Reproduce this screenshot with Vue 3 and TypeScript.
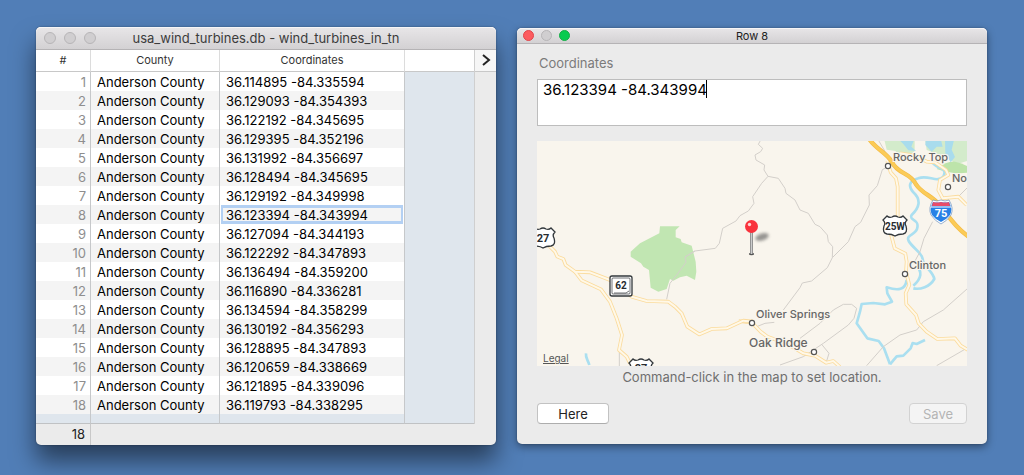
<script setup lang="ts">
import { ref } from 'vue'

interface Turbine {
  county: string
  coordinates: string
}

interface Town {
  name: string
  x: number
  y: number
  labelX: number
  labelY: number
  major?: boolean
}

const turbines: Turbine[] = [
  '36.114895 -84.335594',
  '36.129093 -84.354393',
  '36.122192 -84.345695',
  '36.129395 -84.352196',
  '36.131992 -84.356697',
  '36.128494 -84.345695',
  '36.129192 -84.349998',
  '36.123394 -84.343994',
  '36.127094 -84.344193',
  '36.122292 -84.347893',
  '36.136494 -84.359200',
  '36.116890 -84.336281',
  '36.134594 -84.358299',
  '36.130192 -84.356293',
  '36.128895 -84.347893',
  '36.120659 -84.338669',
  '36.121895 -84.339096',
  '36.119793 -84.338295',
].map((coordinates) => ({ county: 'Anderson County', coordinates }))

const selected = ref(7)
const value = ref(turbines[7].coordinates)

const towns: Town[] = [
  { name: 'Rocky Top', x: 351, y: 25, labelX: 356, labelY: 20 },
  { name: 'No', x: 411, y: 46, labelX: 415, labelY: 41 },
  { name: 'Clinton', x: 368, y: 133, labelX: 372, labelY: 128 },
  { name: 'Oliver Springs', x: 215, y: 182, labelX: 219, labelY: 177 },
  { name: 'Oak Ridge', x: 277, y: 211, labelX: 212, labelY: 206, major: true },
]

const eastRoads = [
  'M442 78 L452 112 L468 130 L473 155 L473 250 L452 295 L464 340 L496 356 L500 380 L498 410 L508 450 L497 475 L499 508 L528 540 L536 565 L560 590 L592 612 L645 610 L662 632 L690 648',
  'M480 55 L525 62 L560 80 L585 82 L618 105 L625 120 L600 135 L595 165 L608 190 L655 185 L680 210',
  'M-4 558 L36 563 L62 590 L82 605 L125 620 L165 640 L190 655 L225 662 L258 683 L280 678 L300 696',
]
const westRoads = [
  'M55 -30 L75 -10 L82 5 L100 12 L107 30 L135 50 L180 52 L240 75 L305 125 L350 138 L415 140 L435 155 L455 175 L472 215 L508 238 L545 222 L590 220 L640 197 L670 200',
  'M135 50 L155 76 L213 103 L240 140 L260 190 L276 240 L267 285 L290 305 L300 325',
]
const eastTracks = [
  'M62 15 L55 28 L68 40 L62 50 L45 60 L48 75 L74 90 L72 105 L84 124 L65 145 L38 185 L42 205 L25 228 L0 242 L-12 258 L-52 280 L-62 325 L-74 340 L-135 348 L-165 366',
  'M84 124 L115 130 L135 160 L138 175 L165 195 L180 225 L205 235 L225 268 L240 275 L262 300 L265 320 L278 335 L277 368 L262 398 L215 438 L187 444 L180 458 L130 525',
  'M435 100 L427 104 L412 152 L387 180 L388 210 L362 262 L345 275 L325 320 L277 368',
  'M415 15 L450 75',
  'M578 260 L552 310 L540 350 L525 378',
  'M690 150 L655 185',
  'M50 575 L75 565 L103 562',
  'M180 610 L240 565 L280 525 L310 508 L335 508 L350 520 L342 550 L325 570 L250 625 L190 665 L120 690',
  'M245 628 L267 655 L260 678',
  'M380 692 L430 635 L480 600 L530 585 L550 560 L610 525 L690 454',
  'M590 692 L690 634',
]
</script>

<template>
  <main class="desktop">
    <section class="window table-window" aria-label="usa_wind_turbines.db">
      <header class="titlebar">
        <div class="lights"><i></i><i></i><i></i></div>
        <h1>usa_wind_turbines.db - wind_turbines_in_tn</h1>
      </header>
      <div class="sheet">
        <table>
          <colgroup>
            <col class="c-num" /><col class="c-county" /><col class="c-coord" /><col />
          </colgroup>
          <thead>
            <tr><th scope="col">#</th><th scope="col">County</th><th scope="col">Coordinates</th><td></td></tr>
          </thead>
          <tbody>
            <tr v-for="(t, i) in turbines" :key="i">
              <td class="num">{{ i + 1 }}</td>
              <td>{{ t.county }}</td>
              <td :class="{ selected: i === selected }">{{ t.coordinates }}</td>
              <td class="empty"></td>
            </tr>
            <tr class="rest"><td></td><td></td><td></td><td></td></tr>
          </tbody>
        </table>
        <div class="side">
          <button type="button" class="expand" aria-label="Show details">
            <svg width="10" height="14" viewBox="0 0 10 14"><path d="M2 1 L8 6 L2 11" /></svg>
          </button>
        </div>
      </div>
      <footer class="status"><span>18</span></footer>
    </section>

    <section class="window detail-window" aria-label="Row 8">
      <header class="titlebar small">
        <div class="lights"><i class="red"></i><i></i><i class="green"></i></div>
        <h2>Row 8</h2>
      </header>
      <form class="detail" @submit.prevent>
        <label for="coordinates">Coordinates</label>
        <div class="field">
          <textarea id="coordinates" v-model="value" spellcheck="false"></textarea>
          <span class="caret"></span>
        </div>
        <div class="map">
          <svg viewBox="0 0 430 225" role="img" aria-label="Map">
            <defs>
              <linearGradient id="needle" x1="0" x2="1" y1="0" y2="0">
                <stop offset="0" stop-color="#777" /><stop offset=".5" stop-color="#ccc" /><stop offset="1" stop-color="#777" />
              </linearGradient>
              <filter id="soft" x="-50%" y="-50%" width="200%" height="200%"><feGaussianBlur stdDeviation="1.6" /></filter>
              <path id="us-shield" d="M-8 -10 Q-6 -8 -3 -9 Q0 -11 3 -9 Q6 -8 8 -10 L12 -6 Q9 -3 11 0 Q13 7 8 8 Q3 8 0 10 Q-3 8 -8 8 Q-13 7 -11 0 Q-9 -3 -12 -6Z" />
            </defs>
            <rect width="430" height="225" fill="#f9f5ed" />
            <g transform="scale(.33333)" fill="none" stroke-linejoin="round">
              <g transform="translate(-21 -18)">
                <path fill="#c1e6b2" d="M390 274 H449 L437 285 V307 L452 312 L455 322 L485 332 L497 380 L499 410 L495 435 L470 422 L450 427 L430 437 L420 432 L410 462 L385 470 L362 458 L357 405 L340 395 L333 385 L302 365 V350 L330 325 L388 295Z" />
                <path class="track" d="M495 348 L465 366 L468 382 L440 420 L420 445 L410 493 M268 645 V695" />
              </g>
              <g transform="translate(609 -18)">
                <path fill="#d3ebcb" d="M432 10 H524 V48 L512 60 L485 66 L466 48 L440 44Z M555 10 H690 V75 L650 88 L620 66 L560 45Z" />
                <path fill="#bde4aa" d="M590 102 Q620 78 645 80 Q672 86 690 98 V112 Q640 120 590 102Z" />
                <path fill="#a9dced" d="M478 15 H522 L514 35 L528 48 L505 46 L490 27Z M557 15 H603 L608 35 L590 35 L575 50 L556 30Z M615 12 L642 15 L635 44 L645 66 L632 82 L616 55Z" />
                <path class="river" d="M575 80 C590 105 625 95 610 125 C590 145 565 118 535 130 C505 138 505 155 520 172 C545 195 538 218 515 240 C505 258 538 250 532 278 C530 300 496 298 506 318 C518 340 545 350 548 372 C550 395 580 410 583 432 C570 455 540 465 520 460" />
                <path class="river" d="M528 390 C548 410 545 430 520 452 M500 435 C496 465 475 468 440 457 L442 475 L456 500 L435 508 L400 504 L365 507 L360 530 L350 565 L382 610 L416 618 L432 640 L450 688" />
                <path class="river" d="M450 688 L470 664 L490 662 L512 640 L518 624 L530 627 L555 615" />
                <path v-for="d in eastTracks" :key="d" class="track" :d="d" />
                <path v-for="d in eastRoads" :key="d" class="road" :d="d" />
                <path v-for="d in eastRoads" :key="d" class="road-core" :d="d" />
                <path class="freeway" d="M385 8 C405 42 440 52 455 80 C475 120 510 110 528 148 C548 178 575 180 600 212 C635 258 660 290 700 315" />
                <path class="freeway core" d="M385 8 C405 42 440 52 455 80 C475 120 510 110 528 148 C548 178 575 180 600 212 C635 258 660 290 700 315" />
              </g>
              <g transform="translate(-21 342)">
                <path v-for="d in westRoads" :key="d" class="road" :d="d" />
                <path v-for="d in westRoads" :key="d" class="road-core" :d="d" />
                <path class="river" d="M168 295 C166 310 174 315 178 330" />
              </g>
            </g>

            <g class="shield">
              <g transform="translate(6 97)"><use href="#us-shield" /><text y="4">27</text></g>
              <g transform="translate(104 228)"><use href="#us-shield" /><text y="3">27</text></g>
              <g transform="translate(358 85)"><use href="#us-shield" /><text class="long" y="4">25W</text></g>
              <g transform="translate(84 145)">
                <rect x="-11" y="-10" width="22" height="20" rx="2" /><rect class="thin" x="-9" y="-8" width="18" height="16" rx="1" />
                <path class="thin" d="M-7 7 H5 L8 5" /><text class="long" y="3">62</text>
              </g>
              <g class="interstate" transform="translate(404 71)">
                <path class="halo" d="M-8 -12 Q-4 -10 0 -12 Q4 -10 8 -12 Q13 -4 10 3 Q6 9 0 12 Q-6 9 -10 3 Q-13 -4 -8 -12Z" />
                <path class="blue" d="M-8 -10 Q-4 -9 0 -10 Q4 -9 8 -10 Q12 -3 9 3 Q5 8 0 10 Q-5 8 -9 3 Q-12 -3 -8 -10Z" />
                <path class="top" d="M-8 -10 Q-4 -9 0 -10 Q4 -9 8 -10 L9 -6 H-9Z" /><path class="rule" d="M-10 -5 H10" />
                <text y="5">75</text>
              </g>
            </g>

            <g v-for="t in towns" :key="t.name">
              <circle class="town" :cx="t.x" :cy="t.y" r="2.6" />
              <text class="town-name" :class="{ major: t.major }" :x="t.labelX" :y="t.labelY">{{ t.name }}</text>
            </g>

            <g class="pin">
              <ellipse cx="225" cy="96" rx="7" ry="3.5" transform="rotate(-18 225 96)" fill="#555" opacity=".6" filter="url(#soft)" />
              <ellipse cx="214.5" cy="113" rx="2.6" ry="1.2" fill="#555" />
              <rect x="213" y="90" width="3" height="23" rx="1" fill="url(#needle)" />
              <circle cx="214.5" cy="85.5" r="6.5" fill="#f9323c" />
              <circle cx="212.5" cy="83.5" r="1.7" fill="#ffd3d3" />
            </g>
          </svg>
          <a class="legal" href="#legal">Legal</a>
        </div>
        <p>Command-click in the map to set location.</p>
        <div class="actions">
          <button type="button" class="here">Here</button>
          <button type="submit" class="save" disabled>Save</button>
        </div>
      </form>
    </section>
  </main>
</template>

<style>
body {
  margin: 0;
  background: #517eb7;
}
</style>

<style scoped>
* {
  box-sizing: border-box;
}
.desktop {
  display: flex;
  align-items: flex-start;
  gap: 21px;
  min-height: 100vh;
  padding: 27px 37px 30px 36px;
  overflow: hidden;
  background: #517eb7;
  font-family: Inter, "Liberation Sans", sans-serif;
  font-size: 13px;
  color: #000;
}
.window {
  min-width: 0;
  background: #ebebeb;
  border-radius: 5px;
}
.table-window {
  flex: 460 1 0;
  box-shadow: 0 0 2px rgba(0, 0, 0, 0.4), 0 16px 24px rgba(0, 0, 0, 0.5);
}
.detail-window {
  flex: 470 1 0;
  margin-top: 1px;
  box-shadow: 0 0 2px rgba(0, 0, 0, 0.3), 0 3px 8px rgba(0, 0, 0, 0.4);
}
.titlebar {
  position: relative;
  display: flex;
  align-items: center;
  justify-content: center;
  height: 23px;
  border-bottom: 1px solid #b5b3b5;
  border-radius: 5px 5px 0 0;
  background: linear-gradient(#e8e6e8, #d3d1d3);
  box-shadow: inset 0 1px #f6f5f6;
}
.titlebar.small {
  height: 16px;
}
h1,
h2 {
  margin: 0;
  font-size: 13px;
  font-weight: 400;
  color: #3c3c3c;
}
h2 {
  font-size: 11px;
  color: #222;
}
.lights {
  position: absolute;
  left: 8px;
  display: flex;
  gap: 8px;
}
.lights i {
  width: 12px;
  height: 12px;
  border: 1px solid #b7b5b7;
  border-radius: 50%;
  background: #d0ced0;
}
.small .lights {
  left: 6px;
  gap: 7px;
}
.small .lights i {
  width: 11px;
  height: 11px;
}
.lights i.red {
  border-color: #e2444a;
  background: #fc5b5f;
}
.lights i.green {
  border-color: #14ae46;
  background: #08cb4f;
}
.sheet {
  display: flex;
}
table {
  flex: 1;
  width: 0;
  table-layout: fixed;
  border-collapse: separate;
  border-spacing: 0;
  background: #fff;
}
.c-num {
  width: 55px;
}
.c-county {
  width: 129px;
}
.c-coord {
  width: 185px;
}
td,
th {
  overflow: hidden;
  padding: 0 6px;
  border-right: 1px solid #c6c8ca;
  white-space: nowrap;
}
td:last-child {
  border-right: 0;
}
thead th,
thead td {
  height: 22px;
  padding-bottom: 2px;
  border-bottom: 1px solid #c8c8c8;
  border-right-color: #dcdcdc;
  font-size: 11px;
  font-weight: 400;
  color: #333;
}
tbody td {
  height: 19px;
  padding-top: 2px;
  line-height: 17px;
}
tbody tr:nth-child(even) td {
  background: #f4f4f4;
}
tbody td.num {
  padding-right: 4px;
  text-align: right;
  color: #8e8e8e;
}
tbody tr td.empty,
tbody tr.rest td {
  background: #dfe6ed;
}
tbody td.selected {
  box-shadow: inset 1px 0 #fff, inset -1px 0 #fff, inset 0 0 0 3px #b3d0f3;
}
tbody tr.rest td {
  height: 10px;
  padding-top: 0;
  border-bottom: 1px solid #c0c2c4;
}
.side {
  width: 22px;
  border-left: 1px solid #cfcfcf;
}
.expand {
  display: flex;
  align-items: center;
  justify-content: center;
  width: 100%;
  height: 22px;
  padding: 0;
  border: 0;
  border-bottom: 1px solid #c8c8c8;
  background: #f6f6f6;
}
.expand path {
  fill: none;
  stroke: #222;
  stroke-width: 2;
}
.status {
  display: flex;
  height: 21px;
  line-height: 21px;
}
.status span {
  width: 55px;
  padding-right: 5px;
  border-right: 1px solid #c8c8c8;
  text-align: right;
  color: #222;
}
.detail {
  display: flex;
  flex-direction: column;
  padding: 10px 20px 20px;
}
.detail label {
  padding: 0 2px;
  line-height: 18px;
  color: #7b7b7b;
}
.field {
  position: relative;
  display: flex;
  margin: 7px 0 15px;
}
textarea {
  width: 100%;
  height: 47px;
  padding: 0 5px;
  border: 1px solid #bdbdbd;
  border-radius: 0;
  outline: 0;
  resize: none;
  background: #fff;
  font: 15px/20px Inter, "Liberation Sans", sans-serif;
  color: #000;
}
.caret {
  position: absolute;
  left: 169px;
  top: 1px;
  width: 1px;
  height: 18px;
  background: #000;
}
.map {
  position: relative;
}
.map > svg {
  display: block;
  width: 100%;
  height: auto;
  overflow: hidden;
}
.track {
  stroke: #d3cfca;
  stroke-width: 3;
}
.river {
  stroke: #aadff0;
  stroke-width: 8;
}
.road {
  stroke: #fbdb9c;
  stroke-width: 11;
}
.road-core {
  stroke: #fff8e8;
  stroke-width: 6;
}
.freeway {
  stroke: #f4bb45;
  stroke-width: 13;
}
.freeway.core {
  stroke: #fbcb57;
  stroke-width: 9;
}
.shield {
  fill: #fff;
  stroke: #33383c;
  stroke-width: 1.3;
}
.shield .thin {
  stroke-width: 0.7;
}
.shield text {
  fill: #272c31;
  stroke: none;
  font: 700 11px "Roboto", sans-serif;
  text-anchor: middle;
}
.shield text.long {
  font-size: 10px;
}
.interstate .halo {
  fill: #fff;
  stroke: #6c8fbd;
  stroke-width: 0.7;
}
.interstate .blue {
  fill: #2680e6;
  stroke: none;
}
.interstate .top {
  fill: #e94c68;
  stroke: none;
}
.interstate .rule {
  stroke: #fff;
  stroke-width: 1;
}
.shield .interstate text {
  fill: #fff;
}
.town {
  fill: #fff;
  stroke: #555;
  stroke-width: 1.2;
}
.town-name {
  fill: #666;
  stroke: #f9f5ed;
  stroke-width: 2;
  paint-order: stroke;
  font-size: 11px;
  font-weight: 500;
}
.town-name.major {
  font-size: 12px;
}
.legal {
  position: absolute;
  left: 6px;
  bottom: 1px;
  font-size: 10px;
  line-height: 14px;
  color: #555;
}
.detail p {
  margin: 2px 0 16px;
  line-height: 19px;
  text-align: center;
  color: #6f6f6f;
}
.actions {
  display: flex;
  justify-content: space-between;
}
.actions button {
  height: 21px;
  padding: 0;
  border: 1px solid #c2c2c2;
  border-bottom-color: #adadad;
  border-radius: 4px;
  background: #fff;
  font: 13px/18px Inter, "Liberation Sans", sans-serif;
  color: #222;
}
.actions .here {
  width: 72px;
}
.actions .save {
  width: 58px;
  border-color: #d2d2d2;
  background: #f4f4f4;
  color: #b4b4b4;
}
</style>
